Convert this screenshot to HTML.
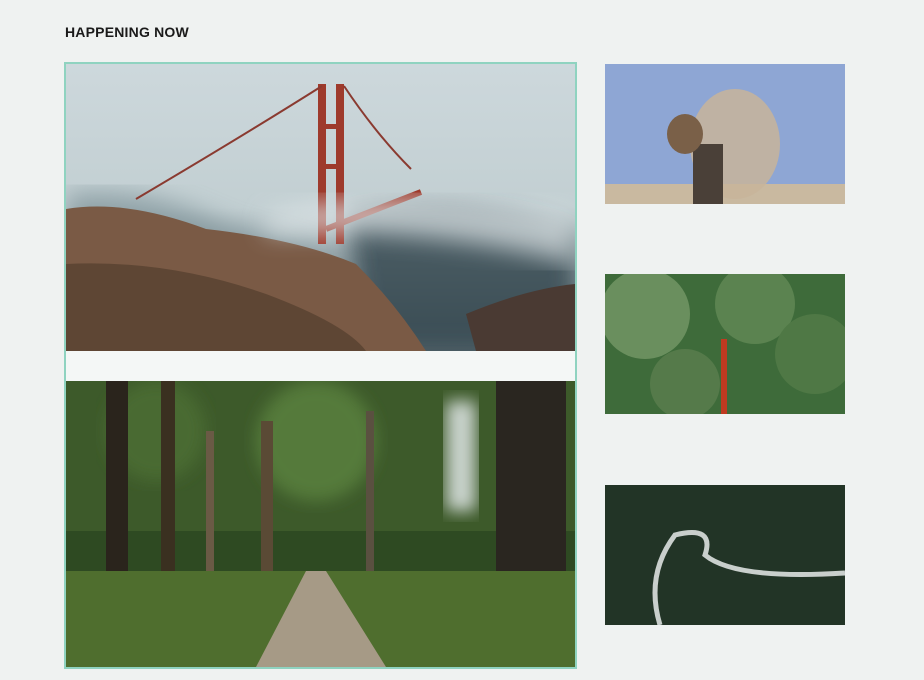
<!DOCTYPE html><html><head><style>
body{margin:0;width:924px;height:680px;overflow:hidden;background:#eff2f1;font-family:"Liberation Sans",sans-serif;position:relative}
.t{position:absolute;left:65px;top:24px;font-size:14px;font-weight:bold;color:#1a1a1a;letter-spacing:0.2px}
.card{position:absolute;left:64px;top:62px;width:509px;height:603px;border:2px solid #8fd3c0;background:#f4f7f6}
.a{position:absolute}
</style></head><body>
<div class="t">HAPPENING NOW</div>
<div class="card"></div>
<svg class="a" style="left:66px;top:64px" width="509" height="287">
<defs><linearGradient id="s" x1="0" y1="0" x2="0" y2="1"><stop offset="0" stop-color="#cdd8dc"/><stop offset="0.5" stop-color="#c2cfd2"/><stop offset="1" stop-color="#5a6a70"/></linearGradient>
<filter id="b"><feGaussianBlur stdDeviation="12"/></filter></defs>
<rect width="509" height="287" fill="url(#s)"/>
<path d="M280 150 Q400 130 509 170 L509 287 L300 287Z" fill="#33454d" opacity=".8" filter="url(#b)"/>
<path d="M0 130 Q80 120 160 160 L300 200 L0 200Z" fill="#6f858c" opacity=".6" filter="url(#b)"/>
<path d="M0 145 Q60 135 140 165 Q230 175 290 200 Q330 240 360 287 L0 287Z" fill="#7a5a45"/>
<path d="M0 200 Q100 195 200 230 Q280 260 300 287 L0 287Z" fill="#5e4634"/>
<path d="M400 250 Q460 225 509 220 L509 287 L410 287Z" fill="#4a3a33"/>
<rect x="252" y="20" width="8" height="160" fill="#9e3a2c"/><rect x="270" y="20" width="8" height="160" fill="#9e3a2c"/>
<rect x="252" y="60" width="26" height="5" fill="#9e3a2c"/><rect x="252" y="100" width="26" height="5" fill="#9e3a2c"/>
<path d="M70 135 Q180 70 256 22 M278 22 Q310 70 345 105" stroke="#8a3a30" stroke-width="2" fill="none"/>
<path d="M260 165 L355 128" stroke="#9e3a2c" stroke-width="6"/>
<path d="M200 150 Q300 120 509 150 L509 200 Q350 160 200 170Z" fill="#dfe6e8" opacity=".7" filter="url(#b)"/>
</svg>
<svg class="a" style="left:66px;top:381px" width="509" height="286">
<defs><filter id="c"><feGaussianBlur stdDeviation="8"/></filter></defs>
<rect width="509" height="286" fill="#2e4a22"/>
<rect x="0" y="0" width="509" height="150" fill="#3d5a2a"/>
<circle cx="250" cy="60" r="60" fill="#557a3a" filter="url(#c)"/><circle cx="90" cy="50" r="50" fill="#4a6a30" filter="url(#c)"/>
<rect x="380" y="20" width="30" height="110" fill="#c9d3cc" filter="url(#c)"/>
<rect x="40" y="0" width="22" height="286" fill="#2a241c"/><rect x="95" y="0" width="14" height="250" fill="#3a3020"/>
<rect x="195" y="40" width="12" height="160" fill="#5a4a35"/><rect x="430" y="0" width="70" height="286" fill="#2a2620"/>
<rect x="140" y="50" width="8" height="150" fill="#6a5a45"/><rect x="300" y="30" width="8" height="160" fill="#5a5040"/>
<rect x="0" y="190" width="509" height="96" fill="#4f6e2e"/>
<path d="M240 190 L260 190 L320 286 L190 286Z" fill="#a69a86"/>
</svg>
<svg class="a" style="left:605px;top:64px" width="240" height="140">
<rect width="240" height="140" fill="#8ea6d4"/><rect y="120" width="240" height="20" fill="#c9b9a0"/>
<ellipse cx="130" cy="80" rx="45" ry="55" fill="#c8b49a" opacity=".85"/>
<rect x="88" y="80" width="30" height="60" fill="#4a4038"/>
<ellipse cx="80" cy="70" rx="18" ry="20" fill="#7a6048"/>
</svg>
<svg class="a" style="left:605px;top:274px" width="240" height="140">
<rect width="240" height="140" fill="#3e6b3a"/>
<circle cx="40" cy="40" r="45" fill="#6a8f5e"/><circle cx="150" cy="30" r="40" fill="#5b8350"/><circle cx="210" cy="80" r="40" fill="#4f7845"/><circle cx="80" cy="110" r="35" fill="#557a4a"/>
<rect x="116" y="65" width="6" height="75" fill="#c03a20"/>
</svg>
<svg class="a" style="left:605px;top:485px" width="240" height="140">
<rect width="240" height="140" fill="#223426"/>
<path d="M55 140 Q40 90 70 50 Q110 40 100 70 Q130 95 240 88" stroke="#c9cfcc" stroke-width="5" fill="none"/>
</svg>
</body></html>
